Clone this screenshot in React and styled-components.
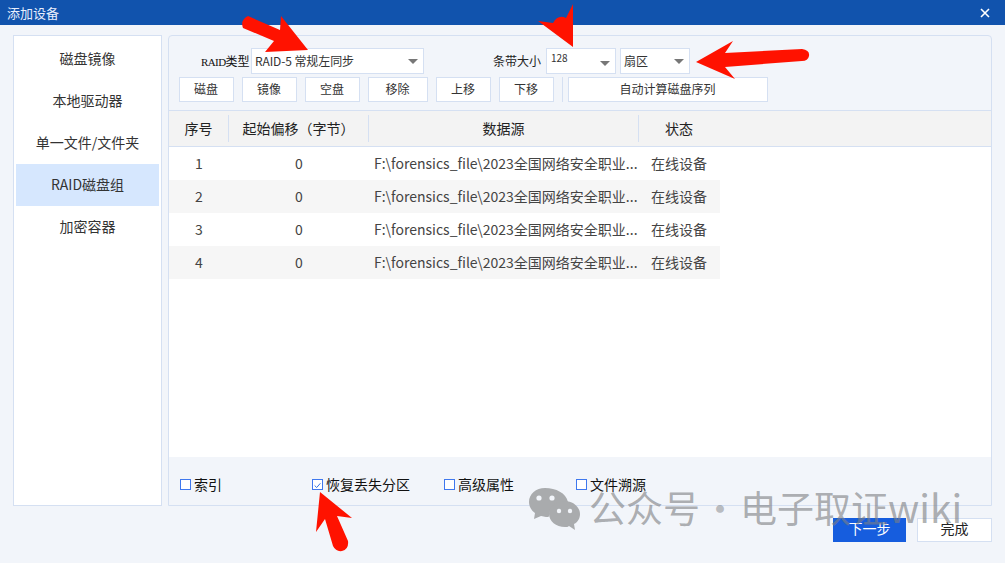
import React from 'react';
import styled, { createGlobalStyle } from 'styled-components';

const FONT = '"Noto Sans CJK SC", "Liberation Sans", sans-serif';
const LINE = '#d5e0f2';

const sources = [1, 2, 3, 4];
const navItems = ['磁盘镜像', '本地驱动器', '单一文件/文件夹', 'RAID磁盘组', '加密容器'];
const sourcePath = 'F:\\forensics_file\\2023全国网络安全职业...';

const App = () => {
    return (
        <Window>
            <GlobalStyle />
            <TitleBar>
                <span>添加设备</span>
                <svg width="10" height="10" viewBox="0 0 10 10">
                    <path d="M1 1l8 8M9 1l-8 8" stroke="#fff" strokeWidth="1.6" />
                </svg>
            </TitleBar>
            <Content>
                <Sidebar>
                    {navItems.map((item) => (
                        <NavItem key={item} $active={item === 'RAID磁盘组'}>{item}</NavItem>
                    ))}
                </Sidebar>
                <Panel>
                    <SettingsRow>
                        <RaidLabel><b>RAID</b>类型</RaidLabel>
                        <Select $width={173}>
                            <span>RAID-5 常规左同步</span>
                            <Caret />
                        </Select>
                        <StripeLabel>条带大小</StripeLabel>
                        <Select $width={70} $small>
                            <span>128</span>
                            <Caret />
                        </Select>
                        <Select $width={70}>
                            <span>扇区</span>
                            <Caret />
                        </Select>
                    </SettingsRow>
                    <ButtonRow>
                        <ToolButton>磁盘</ToolButton>
                        <ToolButton>镜像</ToolButton>
                        <ToolButton>空盘</ToolButton>
                        <ToolButton $width={60}>移除</ToolButton>
                        <ToolButton>上移</ToolButton>
                        <ToolButton>下移</ToolButton>
                        <Divider />
                        <ToolButton $width={200}>自动计算磁盘序列</ToolButton>
                    </ButtonRow>
                    <TableArea>
                        <HeaderRow>
                            <HeaderCell>序号</HeaderCell>
                            <HeaderCell>起始偏移（字节）</HeaderCell>
                            <HeaderCell>数据源</HeaderCell>
                            <HeaderCell>状态</HeaderCell>
                        </HeaderRow>
                        {sources.map((n) => (
                            <Row key={n} $even={n % 2 === 0}>
                                <Cell>{n}</Cell>
                                <Cell>0</Cell>
                                <PathCell>{sourcePath}</PathCell>
                                <Cell>在线设备</Cell>
                            </Row>
                        ))}
                    </TableArea>
                    <OptionsRow>
                        <Option><Check />索引</Option>
                        <Option>
                            <Check>
                                <svg width="11" height="11" viewBox="0 0 11 11">
                                    <path d="M2 5.5l2.5 2.5L9 2.8" fill="none" stroke="#2f6fe0" strokeWidth="1.2" />
                                </svg>
                            </Check>
                            恢复丢失分区
                        </Option>
                        <Option><Check />高级属性</Option>
                        <Option><Check />文件溯源</Option>
                    </OptionsRow>
                </Panel>
            </Content>
            <Footer>
                <NextButton>下一步</NextButton>
                <DoneButton>完成</DoneButton>
            </Footer>

            <Arrows width="1005" height="563" viewBox="0 0 1005 563">
                <g fill="#ff1200">
                    <path d="M281 16L308 50L265 52L274 41L243 28Q240 20 248 16L280 30Z" />
                    <path d="M573 47L538 21L553 23Q558 14 566 18L573 4Z" />
                    <path d="M696 62L733 41L725 53L802 49Q810 50 809 56Q808 61 802 61L725 67L735 79Z" />
                    <path d="M320 492L352 518L337 516L348 541Q349 549 342 551Q336 552 333 546L325 519L316 532Z" />
                </g>
            </Arrows>

            <Watermark>
                <svg width="52" height="44" viewBox="0 0 52 44">
                    <path d="M16 1C7 1 0 7 0 15c0 5 3 9 6 11l-1 6 7-3c2 0 3 1 5 1 2 0 3 0 3-1 0-8 8-14 19-14C37 6 27 1 16 1Z" fill="#a9abad" />
                    <circle cx="10" cy="11" r="2.6" fill="#f2f5fa" />
                    <circle cx="23" cy="11" r="2.6" fill="#f2f5fa" />
                    <path d="M36 14c-9 0-16 6-16 13s7 13 16 13c2 0 3 0 4-1l6 4-1-6c4-2 6-6 6-10 0-7-7-13-15-13Z" fill="#a9abad" />
                    <circle cx="30" cy="24" r="2.2" fill="#f2f5fa" />
                    <circle cx="41" cy="24" r="2.2" fill="#f2f5fa" />
                </svg>
                <WatermarkText>公众号<Dot>·</Dot>电子取证<small>wiki</small></WatermarkText>
            </Watermark>
        </Window>
    );
};

export default App;

const GlobalStyle = createGlobalStyle`
    html, body {
        margin: 0;
        padding: 0;
        background: #f2f5fa;
    }
    * {
        box-sizing: border-box;
    }
`;

const Window = styled.div`
    position: relative;
    display: flex;
    flex-direction: column;
    width: 1005px;
    height: 563px;
    overflow: hidden;
    background: #f2f5fa;
    font-family: ${FONT};
    font-size: 14px;
    color: #333;
`;

const TitleBar = styled.div`
    display: flex;
    align-items: center;
    justify-content: space-between;
    flex: 0 0 25px;
    padding: 0 15px 0 7px;
    background: #1153ad;
    color: #e8eefc;
    font-size: 13px;
`;

const Content = styled.div`
    display: flex;
    gap: 6px;
    height: 471px;
    margin-top: 10px;
    padding: 0 13px;
`;

const Sidebar = styled.div`
    display: flex;
    flex-direction: column;
    flex: 0 0 149px;
    padding: 2px 2px 0 2px;
    background: #fff;
    border: 1px solid ${LINE};
`;

const NavItem = styled.div`
    display: flex;
    align-items: center;
    justify-content: center;
    height: 42px;
    padding-bottom: 2px;
    background: ${(p) => (p.$active ? '#d6e7fe' : 'transparent')};
`;

const Panel = styled.div`
    display: flex;
    flex-direction: column;
    flex: 1;
    border: 1px solid ${LINE};
    border-radius: 4px 4px 0 0;
`;

const SettingsRow = styled.div`
    display: flex;
    align-items: center;
    height: 26px;
    margin-top: 12px;
    padding-left: 32px;
`;

const RaidLabel = styled.span`
    width: 50px;
    padding-bottom: 2px;
    color: #111;
    font-size: 12px;
    white-space: nowrap;

    b {
        font-family: "Liberation Serif", serif;
        font-size: 11px;
        font-weight: 400;
        letter-spacing: -0.6px;
    }
`;

const StripeLabel = styled.span`
    width: 53px;
    margin-left: 65px;
    padding-bottom: 2px;
    font-size: 12px;
    color: #222;
    white-space: nowrap;
`;

const Select = styled.div`
    display: flex;
    align-items: ${(p) => (p.$small ? 'flex-start' : 'center')};
    justify-content: space-between;
    width: ${(p) => p.$width}px;
    height: 26px;
    margin-right: 4px;
    padding: ${(p) => (p.$small ? '1px 5px 0 4px' : '0 5px 2px 3px')};
    background: #fff;
    border: 1px solid ${LINE};
    font-size: ${(p) => (p.$small ? '10px' : '12px')};
    letter-spacing: -0.1px;
`;

const Caret = styled.i`
    align-self: center;
    width: 0;
    height: 0;
    margin-top: 3px;
    border-left: 5px solid transparent;
    border-right: 5px solid transparent;
    border-top: 5px solid #777;
`;

const ButtonRow = styled.div`
    display: flex;
    align-items: center;
    gap: 8px;
    height: 25px;
    margin-top: 3px;
    padding-left: 10px;
`;

const ToolButton = styled.div`
    display: flex;
    align-items: center;
    justify-content: center;
    width: ${(p) => p.$width || 55}px;
    height: 25px;
    padding: 0 1px 2px 0;
    background: #fff;
    border: 1px solid ${LINE};
    font-size: 12px;
`;

const Divider = styled.div`
    width: 1px;
    height: 25px;
    margin-right: -3px;
    background: ${LINE};
`;

const TableArea = styled.div`
    flex: 1;
    margin-top: 8px;
    background: #fff;
    border-top: 1px solid ${LINE};
`;

const columns = '60px 140px 270px 80px';

const HeaderRow = styled.div`
    display: grid;
    grid-template-columns: ${columns} 1fr;
    height: 36px;
    padding: 4px 0;
    background: #f3f3f3;
    border-bottom: 1px solid ${LINE};
`;

const HeaderCell = styled.div`
    display: flex;
    align-items: center;
    justify-content: center;
    padding-bottom: 1px;
    border-right: 1px solid ${LINE};
    color: #222;

    &:last-child {
        border-right: 0;
    }
`;

const Row = styled.div`
    display: grid;
    grid-template-columns: ${columns};
    width: 551px;
    height: 33px;
    background: ${(p) => (p.$even ? '#f6f6f6' : '#fff')};
    color: #444;
`;

const Cell = styled.div`
    display: flex;
    align-items: center;
    justify-content: center;
    padding-bottom: 2px;
`;

const PathCell = styled(Cell)`
    justify-content: flex-start;
    padding-left: 5px;
    white-space: nowrap;
    overflow: hidden;
`;

const OptionsRow = styled.div`
    display: grid;
    grid-template-columns: repeat(4, 132px);
    align-items: center;
    flex: 0 0 48px;
    padding: 6px 0 0 11px;
`;

const Option = styled.label`
    display: flex;
    align-items: center;
    gap: 3px;
    color: #111;
`;

const Check = styled.span`
    display: flex;
    width: 11px;
    height: 11px;
    background: #fff;
    border: 1px solid #3f78ee;
`;

const Footer = styled.div`
    display: flex;
    justify-content: flex-end;
    gap: 11px;
    margin-top: 12px;
    padding-right: 13px;
`;

const NextButton = styled.div`
    display: flex;
    align-items: center;
    justify-content: center;
    width: 73px;
    height: 24px;
    padding-bottom: 4px;
    background: #165dde;
    color: #fff;
`;

const DoneButton = styled(NextButton)`
    width: 75px;
    background: #fff;
    border: 1px solid ${LINE};
    color: #222;
`;

const Arrows = styled.svg`
    position: absolute;
    top: 0;
    left: 0;
    pointer-events: none;
`;

const Watermark = styled.div`
    position: absolute;
    top: 487px;
    left: 529px;
    display: flex;
    align-items: center;
    gap: 9px;
    pointer-events: none;
`;

const WatermarkText = styled.span`
    margin: -5px 0 0 -1px;
    font-size: 37px;
    line-height: 44px;
    white-space: nowrap;
    color: rgba(125, 127, 130, 0.62);

    small {
        font-size: 39px;
    }
`;

const Dot = styled.span`
    margin: 0 1.5px;
    opacity: 0.8;
`;
